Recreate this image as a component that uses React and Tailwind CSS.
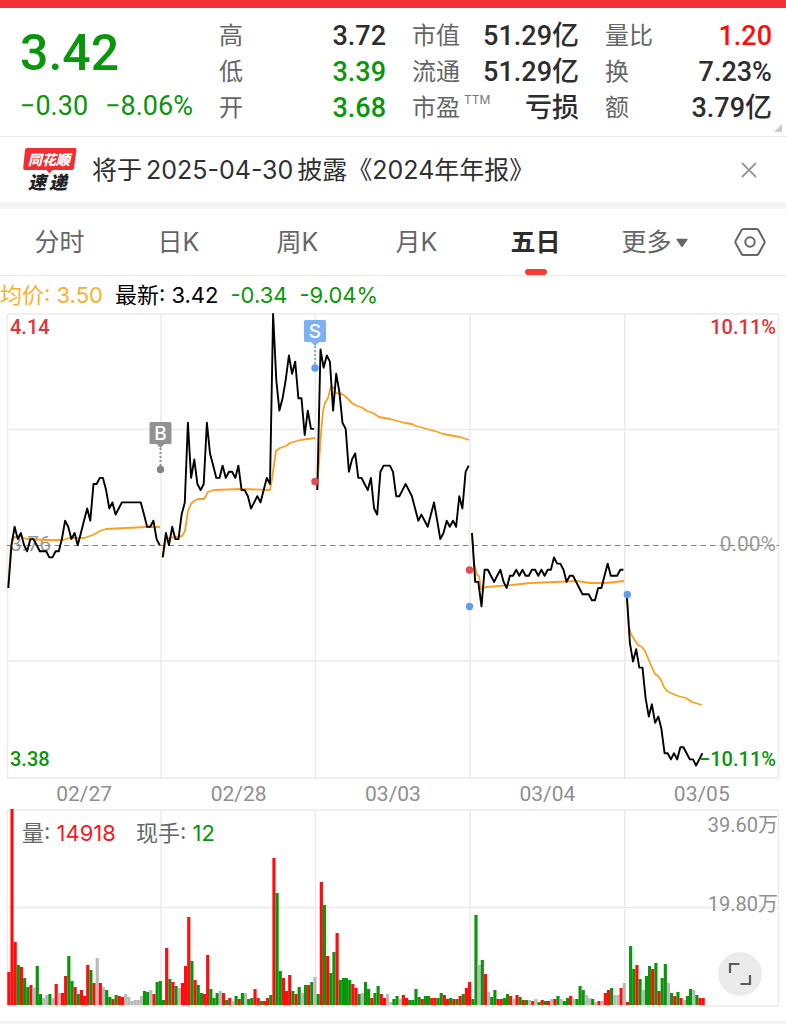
import React from "react";

const NUM = "font-[Roboto,'Noto_Sans_CJK_SC',sans-serif]";
const STEP = 3.155;

/* Price of every five-minute point, in cents above or below 3.76. */
const DAYS = [
  { x: 8.3, p: [-7, 0, 3, 1, 2, 0, -1, 1, 1, 0, -1, -1, -1, -2, -2, -1, -1, 1, 4, 3, 1, 2, 0, 2, 4, 6, 4, 10, 10, 11, 11, 9, 6, 7, 5, 6, 7, 7, 7, 7, 7, 7, 7, 5, 3, 3, 4, 1, 0] },
  { x: 162.7, p: [-2, 2, 0, 3, 1, 1, 5, 7, 20, 11, 14, 10, 9, 10, 20, 15, 13, 11, 11, 13, 11, 12, 12, 11, 13, 9, 9, 8, 6, 7, 8, 7, 9, 11, 10, 38, 27, 22, 24, 27, 31, 28, 30, 24, 24, 18, 22, 19, 19] },
  { x: 317.3, p: [9, 32, 29, 31, 30, 22, 28, 25, 20, 19, 12, 14, 15, 11, 11, 10, 9, 11, 6, 5, 12, 13, 13, 13, 12, 8, 8, 9, 10, 9, 8, 6, 4, 5, 4, 3, 5, 7, 4, 1, 2, 4, 3, 4, 3, 8, 6, 12, 13] },
  { x: 472, p: [2, -6, -6, -10, -4, -4, -5, -6, -5, -4, -6, -7, -5, -5, -4, -5, -4, -5, -5, -4, -4, -5, -4, -5, -4, -4, -2, -3, -3, -4, -6, -5, -5, -6, -7, -8, -8, -8, -9, -9, -7, -7, -5, -3, -5, -5, -5, -4, -4] },
  { x: 626.7, p: [-8, -16, -19, -17, -20, -20, -25, -28, -26, -29, -28, -30, -34, -34, -35, -34, -35, -33, -33, -34, -35, -35, -36, -35, -34] },
];

const AVERAGES = [
  "8,275 11,232 14,225 18,223 27,226 47,227 63,227 69,225 84,225 93,222 100,218 106,216 126,215 146,214 160,214",
  "163,244 166,226 169,225 182,223 185,218 188,198 191,191 194,188 198,186 204,186 208,179 214,177 241,176 270,177 272,166 276,138 280,135 286,133 290,130 300,127 308,126 315,125",
  "317,177 319,150 321,120 323,98 325,90 328,85 331,73 334,75 336,80 342,81 346,84 352,90 357,93 361,94 367,98 373,100 379,104 390,106 405,110 412,111 416,113 438,119 443,121 460,124 469,127",
  "472,220 474,250 477,262 479,263 481,276 486,274 512,272 530,270 555,269 577,268 590,270 606,270 624,268",
  "627,282 629,314 631,321 634,326 638,332 642,334 645,338 650,350 655,361 658,363 661,367 664,374 667,378 671,380 678,383 686,385 692,389 702,392",
];

/* Volume bars: r rise, g fall, a unchanged, followed by the bar's height. */
const VOLUMES = [
  "r33 r196 r63 g40 r38 g27 g18 r20 a17 g39 g11 a7 a10 g11 a7 r21 a12 r12 r29 g49 g24 r18 g11 r15 r9 r40 g35 r22 a47 r22 a18 g15 g8 r6 g10 r9 r8 a11 a8 a4 a5 a5 a9 g14 g13 a15 r11 g23 g24",
  "g5 r57 g26 r23 g19 a17 r22 r39 r88 g44 r25 g20 g12 r11 r50 g16 g7 g12 a14 r12 g5 r7 a4 g9 r6 g12 a12 g6 g7 r16 r7 g4 r4 r7 g10 r147 g112 g34 r27 r14 r30 g14 r11 g18 a12 g20 r20 g23 a28",
  "g11 r123 g100 r49 g32 g53 r72 g25 g27 g27 g25 r21 r17 g11 a12 g23 g16 r7 g12 g19 r11 r7 a11 a3 g6 g9 a6 r10 r7 g5 g5 g16 g8 r6 g9 g9 r7 r7 g7 g12 r10 r6 g7 r6 g6 r9 g11 r17 r23",
  "g6 g90 a40 g45 r31 a13 g8 g15 r6 r6 g7 g11 r9 a6 r10 g8 r5 g5 a5 r4 a6 g3 r5 g4 r4 a6 r6 g9 a6 g4 g7 r9 a6 g6 g19 g15 a10 a7 g6 a3 r4 a4 r12 r15 g17 a10 a10 r17 a22",
  "r3 g59 g36 r40 g26 a15 g29 g39 r36 g42 r14 g27 g41 a22 g12 r9 g13 r7 a5 g9 g16 a15 g10 r7 r7",
];

const BAR_COLORS = { r: "#ff0d0d", g: "#0a960a", a: "#bababa" };
const DIVIDERS = [161, 315.5, 470, 624.8];

const STATS = [
  [["高", "3.72", "text-[#2d2d2d]"], ["低", "3.39", "text-[#0a960a]"], ["开", "3.68", "text-[#0a960a]"]],
  [["市值", "51.29亿", "text-[#2d2d2d]"], ["流通", "51.29亿", "text-[#2d2d2d]"], ["市盈", "亏损", "text-[#2d2d2d]", "TTM"]],
  [["量比", "1.20", "text-[#ff0d0d]"], ["换", "7.23%", "text-[#2d2d2d]"], ["额", "3.79亿", "text-[#2d2d2d]"]],
];

function Quote() {
  return (
    <header className="relative grid grid-cols-[173fr_167fr_167fr_167fr] gap-x-[26px] border-b border-[#e9e9e9] pt-2.5 pr-3.5 pb-[10px] pl-5">
      <div className={`${NUM} min-w-0 font-medium whitespace-nowrap text-[#0a960a]`}>
        <div className="h-[70px] text-[50px] leading-[70px]">3.42</div>
        <div className="flex justify-between text-[27px] leading-[36px] font-normal">
          <span>−0.30</span>
          <span>−8.06%</span>
        </div>
      </div>
      {STATS.map((rows, c) => (
        <dl key={c} className="min-w-0">
          {rows.map(([label, value, color, sup]) => (
            <div key={label} className="flex h-9 items-center justify-between whitespace-nowrap">
              <dt className="relative text-[24px] leading-9 text-[#666]">
                {label}
                {sup && <sup className="absolute top-1 left-full ml-1 font-[Inter,sans-serif] text-[12px] leading-3 text-[#777]">{sup}</sup>}
              </dt>
              <dd className={`${NUM} text-[27px] leading-9 font-medium ${color}`}>{value}</dd>
            </div>
          ))}
        </dl>
      ))}
      <svg className="absolute right-1 bottom-1 size-2" viewBox="0 0 8 8" aria-hidden="true">
        <path d="M8 0V8H0Z" fill="#c8c8c8" />
      </svg>
    </header>
  );
}

function Notice() {
  return (
    <section className="flex h-[65px] items-center pr-7 pl-[22px]">
      <svg className="h-[54px] w-[56px] shrink-0" viewBox="0 -4 56 54" aria-label="同花顺速递">
        <path d="M5 1H53Q55 1 54.500 3L52 21Q51.700 23 50 23H30.500L27.500 26.500L24.500 23H3Q1 23 1.200 21L3 3Q3.300 1 5 1Z" fill="#ee2f33" />
        <text x="6" y="17.500" fontSize="14" fontWeight="900" fontStyle="italic" fill="#fff" fontFamily="'Noto Sans CJK SC', sans-serif">同花顺</text>
        <text x="6" y="42" fontSize="18" fontWeight="900" fontStyle="italic" fill="#222" fontFamily="'Noto Sans CJK SC', sans-serif">速</text>
        <text x="27" y="42" fontSize="18" fontWeight="900" fontStyle="italic" fill="#222" fontFamily="'Noto Sans CJK SC', sans-serif">递</text>
      </svg>
      <p className="ml-3.5 flex-1 text-[25px] leading-9 whitespace-nowrap text-[#303030]">
        将于<span className="mx-1">2025-04-30</span>披露《2024年年报》
      </p>
      <button type="button" aria-label="关闭" className="flex size-[18px] items-center justify-center">
        <svg className="size-4" viewBox="0 0 16 16" stroke="#999" strokeWidth="1.800">
          <path d="M1 1L15 15M15 1L1 15" />
        </svg>
      </button>
    </section>
  );
}

function Tabs() {
  return (
    <nav className="grid h-[67px] grid-cols-[repeat(6,119fr)_72fr] border-b border-[#e9e9e9] text-[25px] text-[#666]">
      {["分时", "日K", "周K", "月K"].map((t) => (
        <button key={t} type="button" className="pt-0.5">{t}</button>
      ))}
      <button type="button" aria-current="page" className="relative pt-0.5 font-bold text-[#2d2d2d]">
        五日
        <span className="absolute bottom-0 left-1/2 h-1.5 w-[22px] -translate-x-1/2 rounded-[3px] bg-[#fb3a34]" />
      </button>
      <button type="button" className="flex items-center justify-center gap-1 pt-0.5">
        更多
        <svg className="h-2.5 w-3" viewBox="0 0 13 10" aria-hidden="true">
          <path d="M1 0.500H12Q13 0.500 12.500 1.500L7.200 9Q6.500 10 5.800 9L0.500 1.500Q0 0.500 1 0.500Z" fill="#666" />
        </svg>
      </button>
      <button type="button" aria-label="设置" className="flex items-center justify-center">
        <svg className="h-[30px] w-[34px]" viewBox="0 0 34 30" fill="none" stroke="#666" strokeWidth="2" strokeLinejoin="round">
          <path d="M10.500 2H23.500Q24.700 2 25.400 3.100L31.300 13.700Q32 15 31.300 16.300L25.400 26.900Q24.700 28 23.500 28H10.500Q9.300 28 8.600 26.900L2.700 16.300Q2 15 2.700 13.700L8.600 3.100Q9.300 2 10.500 2Z" />
          <circle cx="17" cy="15" r="4.700" />
        </svg>
      </button>
    </nav>
  );
}

function Marker({ x, y, letter, color }) {
  return (
    <g>
      <rect x={x - 11} y={y} width="22" height="22" rx="1.500" fill={color} />
      <path d={`M${x - 4} ${y + 22}H${x + 4}L${x} ${y + 26}Z`} fill={color} />
      <path d={`M${x} ${y + 26}V${y + 44}`} stroke={color} strokeWidth="2" strokeDasharray="2 2" />
      <text x={x} y={y + 18} textAnchor="middle" fontSize="19" fill="#fff" fontFamily="Inter, sans-serif">{letter}</text>
    </g>
  );
}

function PriceChart() {
  return (
    <div className={`${NUM} relative text-[20px] leading-6 font-medium`}>
      <span className="absolute top-1/2 left-2.5 -translate-y-3.5 text-[21px] font-normal text-[#999]">3.76</span>
      <svg className="relative block w-full" viewBox="0 0 786 466" fill="none" aria-label="五日价格走势">
        <path d="M7 1H779M7 116.500H779M7 348H779M7 465H779M7.500 1V465M778.500 1V465" stroke="#ebebeb" strokeWidth="1.500" />
        {DIVIDERS.map((x) => (
          <path key={x} d={`M${x} 1V465`} stroke="#ebebeb" strokeWidth="1.500" />
        ))}
        <path d="M7 232.500H779" stroke="#808080" strokeWidth="1.200" strokeDasharray="5.500 4" />
        {AVERAGES.map((points) => (
          <polyline key={points} points={points} stroke="#f9a11f" strokeWidth="1.800" strokeLinejoin="round" />
        ))}
        {DAYS.map(({ x, p }) => (
          <polyline
            key={x}
            points={p.map((n, i) => `${(x + i * STEP).toFixed(1)},${Math.max(1, 232.2 - n * 6.12).toFixed(1)}`).join(" ")}
            stroke="#000"
            strokeWidth="1.900"
            strokeLinejoin="round"
          />
        ))}
        <Marker x={160.5} y={109} letter="B" color="#929292" />
        <Marker x={315} y={7} letter="S" color="#7db1f2" />
        <circle cx="160.500" cy="156.500" r="3.700" fill="#858585" />
        <circle cx="315" cy="55" r="3.700" fill="#5d9fee" />
        <circle cx="315" cy="168.500" r="3.700" fill="#ea4a4d" />
        <circle cx="469.500" cy="257" r="3.700" fill="#ea4a4d" />
        <circle cx="469.500" cy="293.500" r="3.700" fill="#5d9fee" />
        <circle cx="627.300" cy="281.500" r="3.700" fill="#5d9fee" />
      </svg>
      <span className="absolute top-0.5 left-2.5 text-[#e23338]">4.14</span>
      <span className="absolute top-0.5 right-2.5 text-[#e23338]">10.11%</span>
      <span className="absolute top-1/2 right-2.5 -translate-y-3.5 text-[21px] font-normal text-[#999]">0.00%</span>
      <span className="absolute bottom-2 left-2.5 text-[#0a960a]">3.38</span>
      <span className="absolute right-2.5 bottom-2 text-[#0a960a]">−10.11%</span>
    </div>
  );
}

function VolumeChart() {
  return (
    <div className="relative">
      <svg className="block w-full" viewBox="0 0 786 198" fill="none" aria-label="成交量">
        <path d="M7 1H779M7 98.500H779M7 197H779M7.500 1V197M778.500 1V197" stroke="#ebebeb" strokeWidth="1.500" />
        {DIVIDERS.map((x) => (
          <path key={x} d={`M${x} 1V197`} stroke="#ebebeb" strokeWidth="1.500" />
        ))}
        {VOLUMES.map((day, d) =>
          day.split(" ").map((bar, i) => {
            const h = Number(bar.slice(1));
            return <rect key={`${d}-${i}`} x={7.3 + d * 154.65 + i * STEP} y={196 - h} width="3.160" height={h} fill={BAR_COLORS[bar[0]]} />;
          })
        )}
      </svg>
      <p className="absolute top-2 left-[22px] flex gap-5 text-[22px] leading-8 text-[#666]">
        <span>量: <b className="font-normal text-[#f21c1c]">14918</b></span>
        <span>现手: <b className="font-normal text-[#0a960a]">12</b></span>
      </p>
      <span className={`${NUM} absolute top-1 right-2 text-[20px] leading-6 text-[#8f8f8f]`}>39.60万</span>
      <span className={`${NUM} absolute top-[83px] right-2 text-[20px] leading-6 text-[#8f8f8f]`}>19.80万</span>
      <button type="button" aria-label="全屏" className="absolute right-6 bottom-[11px] flex size-11 items-center justify-center rounded-full bg-[#ebebeb]">
        <svg className="size-6" viewBox="0 0 24 24" fill="none" stroke="#5c5c5c" strokeWidth="2.200">
          <path d="M2 11V2H11.500M22 13V22H12.500" />
        </svg>
      </button>
    </div>
  );
}

export default function App() {
  return (
    <main className="w-full overflow-hidden bg-white font-[Inter,'Noto_Sans_CJK_SC',sans-serif]">
      <div className="h-2 bg-[#f33038]" />
      <Quote />
      <Notice />
      <div className="h-[7px] bg-[#f4f4f4]" />
      <Tabs />
      <p className="flex h-[37px] items-center gap-3 text-[22px] leading-8 whitespace-nowrap">
        <span className="text-[#fbb02d]">均价: 3.50</span>
        <span className="text-black">最新: 3.42</span>
        <span className="text-[#0a960a]">-0.34</span>
        <span className="text-[#0a960a]">-9.04%</span>
      </p>
      <PriceChart />
      <div className={`${NUM} grid h-[30px] grid-cols-5 items-center px-[7px] text-center text-[21px] leading-6 text-[#8f8f8f]`}>
        {["02/27", "02/28", "03/03", "03/04", "03/05"].map((d) => (
          <time key={d}>{d}</time>
        ))}
      </div>
      <VolumeChart />
      <div className="mt-3.5 h-[3px] bg-[#f4f4f4]" />
    </main>
  );
}
